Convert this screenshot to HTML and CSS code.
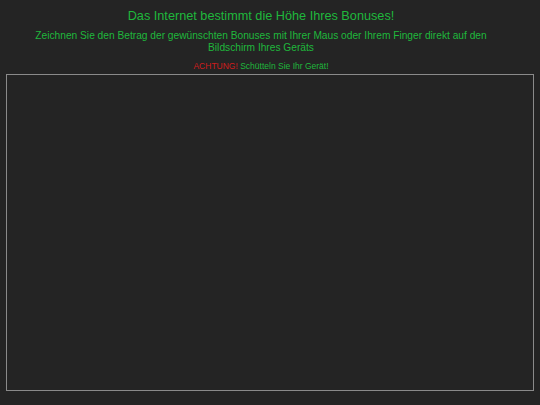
FILE: index.html
```html
<!DOCTYPE html>
<html lang="de">
<head>
<meta charset="utf-8">
<title>Bonus</title>
<link rel="stylesheet" href="styles.css">
</head>
<body>
<div class="page">
  <header class="head">
    <h1 class="title">Das Internet bestimmt die Höhe Ihres Bonuses!</h1>
    <p class="lead">Zeichnen Sie den Betrag der gewünschten Bonuses mit Ihrer Maus oder Ihrem Finger direkt auf den Bildschirm Ihres Geräts</p>
    <p class="warn"><span class="alert">ACHTUNG!</span> Schütteln Sie Ihr Gerät!</p>
  </header>
  <div class="canvas"></div>
</div>
</body>
</html>
```
FILE: styles.css
```css
html, body {
  margin: 0;
  padding: 0;
  background: #242424;
  height: 100%;
}
.page {
  font-family: "Liberation Sans", Arial, sans-serif;
  color: #1fb83c;
  text-align: center;
  padding: 8px 6px 0;
  display: flex;
  flex-direction: column;
  height: 100%;
  box-sizing: border-box;
}
.head {
  padding-right: 18px;
}
.title {
  font-size: 12.7px;
  font-weight: normal;
  margin: 0;
  line-height: 16px;
}
.lead {
  font-size: 10.2px;
  line-height: 12px;
  margin: 6px 0 0;
  padding: 0 10px;
}
.warn {
  font-size: 8.5px;
  line-height: 10px;
  margin: 7px 0 0;
}
.alert {
  color: #d01c1c;
}
.canvas {
  margin-top: 3px;
  height: 315px;
  border: 1px solid #8a8a8a;
}
```
